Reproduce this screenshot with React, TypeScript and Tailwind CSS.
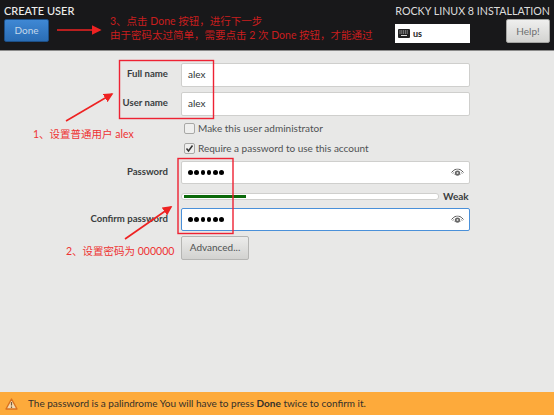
import React from "react";

const font = { fontFamily: 'Lato,"Noto Sans CJK SC",sans-serif' };

function Eye() {
  return (
    <svg width="13" height="9" viewBox="0 0 13 9" className="absolute right-[5px] top-1/2 -translate-y-1/2">
      <path d="M0.5 4 C3 1 5 0.5 6.5 0.5 C8 0.5 10 1 12.5 4" fill="none" stroke="#555" strokeWidth="1" />
      <path d="M1.5 5 L3 4 M11.5 5 L10 4 M3.5 6 L4.5 5 M9.5 6 L8.5 5" stroke="#777" strokeWidth="0.8" />
      <circle cx="6.5" cy="4.6" r="2.7" fill="#666" />
      <circle cx="6.5" cy="4.6" r="1" fill="#ddd" />
    </svg>
  );
}

function Dots() {
  return (
    <div className="flex gap-[1.8px] pl-[6px]">
      {[0, 1, 2, 3, 4, 5].map((i) => (
        <span key={i} className="w-[4.5px] h-[4.5px] rounded-full bg-black" />
      ))}
    </div>
  );
}

function Label({ children }: { children: React.ReactNode }) {
  return <div className="text-right text-[9.6px] font-bold text-[#3a3d3e] whitespace-nowrap pb-[1px]">{children}</div>;
}

function Check({ checked, children }: { checked?: boolean; children: React.ReactNode }) {
  return (
    <div className="col-start-2 flex items-center gap-[3px] h-[20px] ml-[3px]">
      <div className="w-[11px] h-[11px] rounded-[2px] border border-[#a8a8a6] bg-[#efefee] flex items-center justify-center">
        {checked && (
          <svg width="9" height="9" viewBox="0 0 9 9">
            <path d="M1.5 4.5 L3.5 7 L7.5 1.5" fill="none" stroke="#333" strokeWidth="1.5" />
          </svg>
        )}
      </div>
      <span className="text-[10px] text-[#4f5253] whitespace-nowrap">{children}</span>
    </div>
  );
}

export default function App() {
  return (
    <div style={font} className="relative w-[554px] h-[415px] overflow-hidden bg-[#e8e8e7] flex flex-col">
      <header className="h-[51px] shrink-0 bg-[#18181a] border-b border-[#8b8b8b] flex justify-between px-[4px] pt-[4px]">
        <div className="flex flex-col">
          <div className="text-[11px] leading-[14px] font-medium text-[#eeeeec] whitespace-nowrap">CREATE USER</div>
          <button className="mt-[1px] w-[45px] h-[23px] rounded-[2px] bg-gradient-to-b from-[#3f88d4] to-[#2a6db5] border border-[#1c4f87] text-[10px] text-[#c3d7ea]">
            Done
          </button>
        </div>
        <div className="flex flex-col items-end">
          <div className="text-[10.7px] leading-[14px] text-[#dcdcdc] whitespace-nowrap">ROCKY LINUX 8 INSTALLATION</div>
          <div className="flex mt-[1px] gap-[36px] items-start">
            <div className="mt-[5px] w-[75px] h-[19px] bg-white flex items-center pl-[3px] gap-[3px]">
              <svg width="12" height="9" viewBox="0 0 12 9">
                <rect width="12" height="9" rx="1" fill="#222" />
                <path d="M1.5 2 H10.5 M1.5 4 H10.5" stroke="#ddd" strokeWidth="1" strokeDasharray="1 0.8" />
                <path d="M3 6.5 H9" stroke="#ddd" strokeWidth="1" />
              </svg>
              <span className="text-[9px] font-bold text-[#222]">us</span>
            </div>
            <button className="w-[44px] h-[24px] rounded-[2px] bg-gradient-to-b from-[#efefee] to-[#d3d3d1] border border-[#a5a5a3] text-[10px] text-[#6d6f70]">
              Help!
            </button>
          </div>
        </div>
      </header>

      <main className="flex-1 grid grid-cols-[168px_289px] gap-x-[13px] content-start pt-[12px] items-center">
        <Label>Full name</Label>
        <div className="h-[24px] bg-white border border-[#cfcfcd] rounded-[2px] flex items-center pl-[6px] pb-[1px] text-[10px] text-[#2e3436]">alex</div>
        <div className="h-[5px] col-span-2" />
        <Label>User name</Label>
        <div className="h-[24px] bg-white border border-[#cfcfcd] rounded-[2px] flex items-center pl-[6px] pb-[1px] text-[10px] text-[#2e3436]">alex</div>
        <div className="h-[2px] col-span-2" />
        <Check>Make this user administrator</Check>
        <Check checked>Require a password to use this account</Check>
        <div className="h-[3px] col-span-2" />
        <Label>Password</Label>
        <div className="relative h-[23px] bg-white border border-[#cfcfcd] rounded-[2px] flex items-center">
          <Dots />
          <Eye />
        </div>
        <div className="col-start-2 h-[24px] flex items-center gap-[4px]">
          <div className="relative w-[258px] h-[7px] rounded-[3px] bg-white border border-[#cfcfcd] overflow-hidden">
            <div className="h-[3px] mt-[1px] ml-[2px] w-[62px] bg-[#0b6a0b]" />
          </div>
          <span className="text-[10px] font-bold text-[#3a3d3e]">Weak</span>
        </div>
        <Label>Confirm password</Label>
        <div className="relative h-[23px] bg-white border border-[#4a90d9] rounded-[2px] flex items-center">
          <Dots />
          <Eye />
        </div>
        <div className="h-[5px] col-span-2" />
        <button className="col-start-2 w-[68px] h-[24px] rounded-[2px] bg-gradient-to-b from-[#ececeb] to-[#d2d2d0] border border-[#b5b5b3] text-[10px] text-[#4f5253] pb-[1px]">
          Advanced...
        </button>
      </main>

      <footer className="h-[23px] shrink-0 bg-[#fdaa3b] flex items-center pl-[5px] gap-[10px]">
        <svg width="13" height="12" viewBox="0 0 13 12">
          <path d="M6.5 1 L12 11 H1 Z" fill="#f3d9b0" stroke="#d9711f" strokeWidth="1.4" strokeLinejoin="round" />
          <path d="M6.5 4 V7.5 M6.5 8.5 V10" stroke="#7a5a3a" strokeWidth="1.2" />
        </svg>
        <span className="text-[10px] text-[#33302a] whitespace-nowrap">
          The password is a palindrome You will have to press <b>Done</b> twice to confirm it.
        </span>
      </footer>

      {/* screenshot annotations */}
      <svg className="absolute inset-0 pointer-events-none" width="554" height="415">
        <defs>
          <marker id="a" markerWidth="6" markerHeight="6" refX="5" refY="3" orient="auto">
            <path d="M0 0 L6 3 L0 6 Z" fill="#ee2222" />
          </marker>
        </defs>
        <rect x="119.5" y="60.5" width="94" height="58" fill="none" stroke="#ee2233" strokeWidth="1.4" />
        <rect x="178" y="158.5" width="55" height="75" fill="none" stroke="#ee2233" strokeWidth="1.4" />
        <path d="M57 30 H100" stroke="#ee2222" strokeWidth="1.6" markerEnd="url(#a)" />
        <path d="M66 121 L112 94" stroke="#ee2222" strokeWidth="1.6" markerEnd="url(#a)" />
        <path d="M125 239 L171 207" stroke="#ee2222" strokeWidth="1.6" markerEnd="url(#a)" />
      </svg>
      <div className="absolute left-[110px] top-[14px] text-[10.5px] leading-[14px] text-[#c81e1e] whitespace-nowrap">
        <div>3、点击 Done 按钮，进行下一步</div>
        <div>由于密码太过简单，需要点击 2 次 Done 按钮，才能通过</div>
      </div>
      <div className="absolute left-[33px] top-[127px] text-[10.5px] leading-[14px] text-[#ee3333] whitespace-nowrap">1、设置普通用户 alex</div>
      <div className="absolute left-[66px] top-[244px] text-[10.5px] leading-[14px] text-[#ee3333] whitespace-nowrap">2、设置密码为 000000</div>
    </div>
  );
}
